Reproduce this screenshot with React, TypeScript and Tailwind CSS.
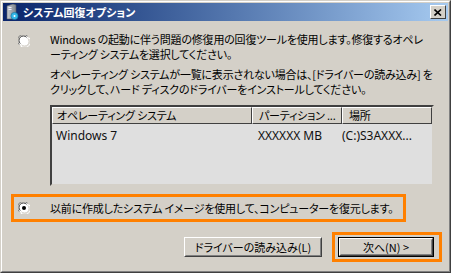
import React from "react";

const jp = "font-['Noto_Sans_CJK_JP',sans-serif] [font-feature-settings:'palt']";

function Radio({ checked = false }: { checked?: boolean }) {
  return (
    <svg width="12" height="12" viewBox="0 0 12 12" className="shrink-0">
      <circle cx="6" cy="6" r="5.5" fill="#fff" />
      <path d="M1.2 9.6 A5.2 5.2 0 0 1 9.6 1.2" fill="none" stroke="#808080" strokeWidth="1" />
      <path d="M2.3 8.6 A4 4 0 0 1 8.6 2.3" fill="none" stroke="#404040" strokeWidth="1" />
      <path d="M10.8 2.4 A5.2 5.2 0 0 1 2.4 10.8" fill="none" stroke="#ffffff" strokeWidth="1" />
      <path d="M9.7 3.4 A4 4 0 0 1 3.4 9.7" fill="none" stroke="#d4d0c8" strokeWidth="1" />
      {checked && <circle cx="6" cy="6" r="2" fill="#000" />}
    </svg>
  );
}

function TitleIcon() {
  return (
    <svg width="14" height="16" viewBox="0 0 14 16">
      <defs>
        <linearGradient id="tw" x1="0" x2="1">
          <stop offset="0" stopColor="#c8ccd2" />
          <stop offset="1" stopColor="#7d848c" />
        </linearGradient>
      </defs>
      <path d="M2 2 L8 0 L11 1 L11 15 L2 15 Z" fill="url(#tw)" stroke="#5a5f66" strokeWidth="0.6" />
      <rect x="3.5" y="3" width="3" height="1" fill="#eef" />
      <rect x="3.5" y="5" width="3" height="1" fill="#eef" />
      <circle cx="9.5" cy="12" r="3.6" fill="#35b7e8" stroke="#0c6d9a" strokeWidth="0.6" />
      <circle cx="9.5" cy="12" r="1" fill="#fff" />
    </svg>
  );
}

function Button({ label, isDefault = false, width }: { label: string; isDefault?: boolean; width: string }) {
  return (
    <div className={`${width} h-[20px] bg-[#d4d0c8] ${isDefault ? "border border-black" : ""}`}>
      <div className="h-full w-full border border-t-white border-l-white border-r-[#404040] border-b-[#404040]">
        <div className={`h-full w-full flex items-center justify-center border border-t-[#d4d0c8] border-l-[#d4d0c8] border-r-[#808080] border-b-[#808080] text-[11px] leading-none text-black ${jp}`}>
          {label}
        </div>
      </div>
    </div>
  );
}

const headCell =
  "bg-[#d4d0c8] border border-t-white border-l-white border-r-[#404040] border-b-[#404040] flex items-center text-[11px] leading-none";

export default function App() {
  return (
    <div className="w-[451px] h-[273px] bg-[#d4d0c8] border border-t-[#d4d0c8] border-l-[#d4d0c8] border-r-[#404040] border-b-[#404040] overflow-hidden">
      <div className="h-full border border-t-white border-l-white border-r-[#808080] border-b-[#808080] p-px flex flex-col">
        {/* title bar */}
        <div className="h-[18px] shrink-0 flex items-center bg-gradient-to-r from-[#0a246a] to-[#a6caf0] pl-[2px] pr-[2px]">
          <TitleIcon />
          <span className={`ml-[4px] text-white font-bold text-[11px] leading-none ${jp}`}>
            システム回復オプション
          </span>
          <div className="ml-auto w-[16px] h-[14px] bg-[#d4d0c8] border border-t-white border-l-white border-r-[#404040] border-b-[#404040] flex items-center justify-center">
            <svg width="8" height="7" viewBox="0 0 8 7">
              <path d="M0.5 0.5 L7 6.5 M7 0.5 L0.5 6.5" stroke="#000" strokeWidth="1.6" />
            </svg>
          </div>
        </div>

        {/* content */}
        <div className="flex-1 flex flex-col pl-[8px] pr-[3px] pt-[11px]">
          <div className="flex items-start pl-[7px]">
            <div className="pt-[3px]">
              <Radio />
            </div>
            <div className={`ml-[20px] text-[11px] leading-[15px] text-black tracking-[-0.2px] whitespace-nowrap ${jp}`}>
              <p>Windows の起動に伴う問題の修復用の回復ツールを使用します。修復するオペレ</p>
              <p>ーティング システムを選択してください。</p>
              <p className="mt-[5px]">オペレーティング システムが一覧に表示されない場合は、[ドライバーの読み込み] を</p>
              <p>クリックして、ハード ディスクのドライバーをインストールしてください。</p>

              <div className="mt-[8px] w-[384px] h-[81px] border-2 border-t-[#404040] border-l-[#404040] border-r-[#d4d0c8] border-b-[#d4d0c8] bg-[#dfdfdf]">
                <div className="grid grid-cols-[200px_90px_90px] h-[17px]">
                  <div className={`${headCell} pl-[4px]`}>オペレーティング システム</div>
                  <div className={`${headCell} pl-[6px]`}>パーティション ...</div>
                  <div className={`${headCell} pl-[6px]`}>場所</div>
                </div>
                <div className="grid grid-cols-[200px_90px_90px] pt-[4px] font-['Noto_Sans',sans-serif] text-[12px] leading-[16px] text-[#111] tracking-normal">
                  <div className="pl-[4px]">Windows 7</div>
                  <div className="pl-[6px]">XXXXXX MB</div>
                  <div>(C:)S3AXXX...</div>
                </div>
              </div>
            </div>
          </div>

          <div className="mt-[8px] w-[395px] h-[28px] border-[3px] border-[#ff8000] flex items-center pl-[4px]">
            <Radio checked />
            <span className={`ml-[20px] text-[11px] leading-[15px] text-black whitespace-nowrap tracking-[-0.2px] ${jp}`}>
              以前に作成したシステム イメージを使用して、コンピューターを復元します。
            </span>
          </div>

          <div className="mt-[10px] flex items-center justify-end pr-[3px]">
            <Button label="ドライバーの読み込み(L)" width="w-[138px]" />
            <div className="ml-[10px] border-[3px] border-[#ff8000] pt-[2px] pb-[2px] pl-[3px] pr-[5px]">
              <Button label="次へ(N) >" isDefault width="w-[96px]" />
            </div>
          </div>
        </div>
      </div>
    </div>
  );
}
